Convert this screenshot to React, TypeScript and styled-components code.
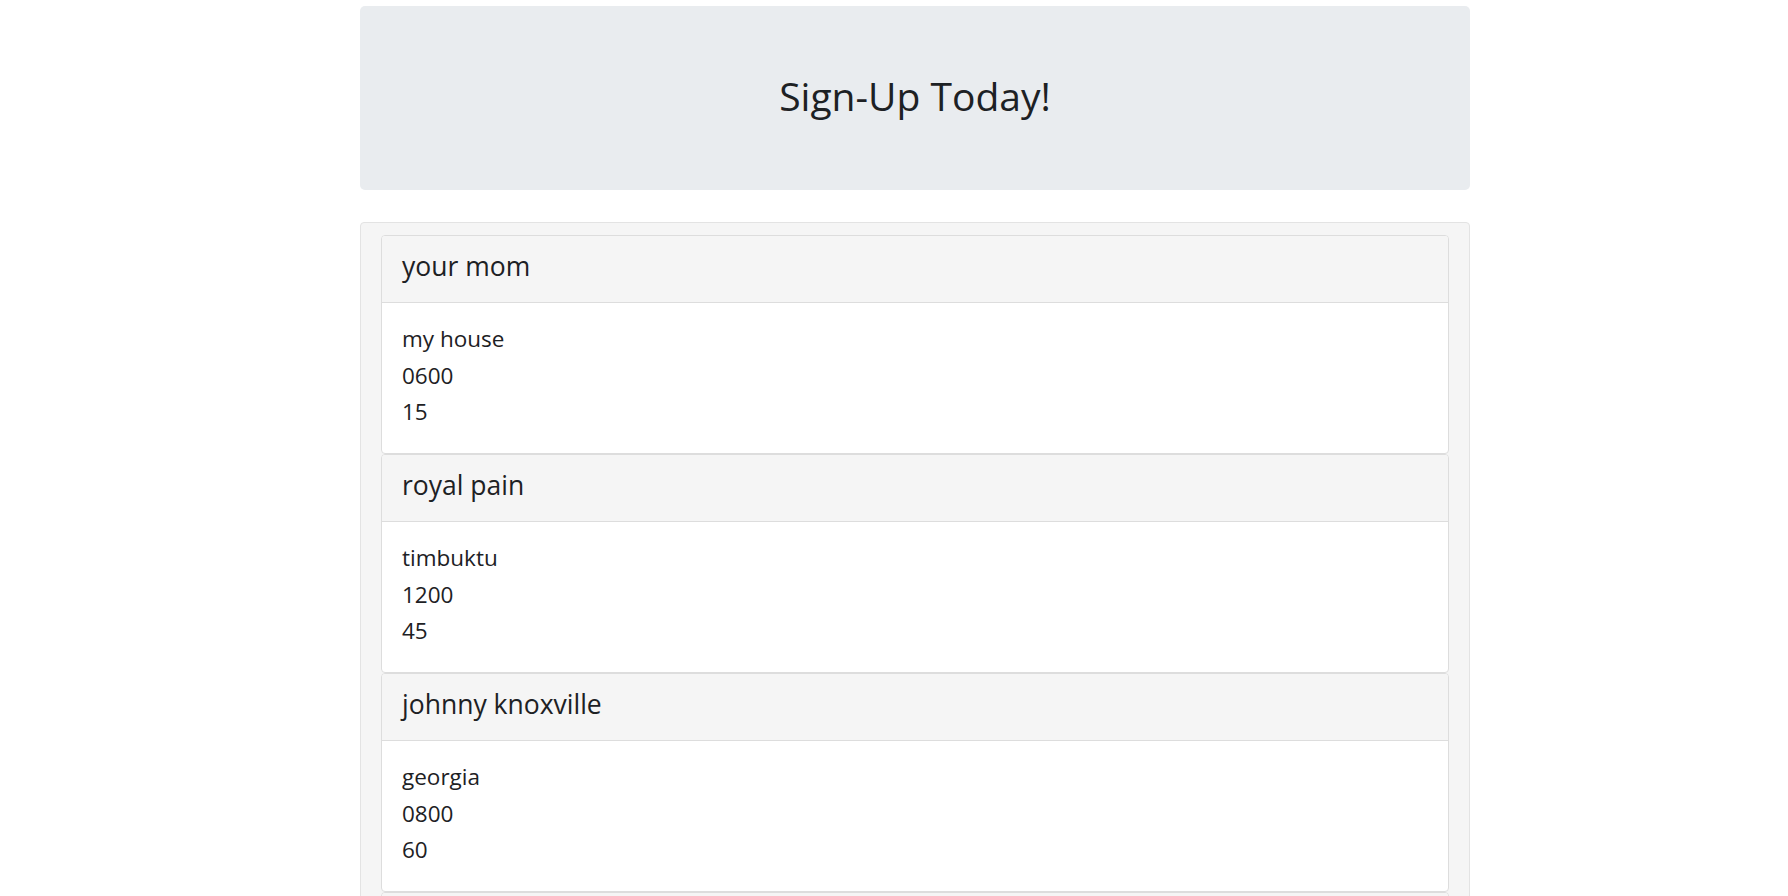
import React from 'react';
import styled, { createGlobalStyle } from 'styled-components';

const GlobalStyle = createGlobalStyle`
  body {
    margin: 0;
    background: #fff;
    color: #212529;
    font-family: "Open Sans", "Noto Sans", Arial, sans-serif;
  }
`;

const Page = styled.div`
  padding: 6px 0 0 42px;
`;

const PageContainer = styled.div`
  width: 1110px;
  margin: 0 auto;
`;

const Jumbotron = styled.div`
  background: #e9ecef;
  border-radius: 5px;
  padding: 64px 32px;
  margin-bottom: 32px;
  text-align: center;
`;

const HeroTitle = styled.h1`
  margin: 2px 0 6px;
  font-size: 39px;
  font-weight: 400;
  line-height: 48px;
  color: #1d2124;
`;

const Well = styled.div`
  background: #f5f5f5;
  border: 1px solid #e3e3e3;
  border-radius: 4px;
  padding: 12px 20px 0;
`;

const Panel = styled.div`
  background: #fff;
  border: 1px solid #ddd;
  border-radius: 4px;
  overflow: hidden;
`;

const PanelHeading = styled.div`
  background: #f5f5f5;
  border-bottom: 1px solid #ddd;
  padding: 13px 20px 19px;
  font-size: 26.5px;
  line-height: 34px;
  color: #1d2124;
`;

const PanelBody = styled.div`
  padding: 18px 20px 22px;
  font-size: 22.5px;
  line-height: 36.67px;
  color: #1d2124;
`;

const Line = styled.div``;

const signups = [
  { name: 'your mom', place: 'my house', time: '0600', minutes: '15' },
  { name: 'royal pain', place: 'timbuktu', time: '1200', minutes: '45' },
  { name: 'johnny knoxville', place: 'georgia', time: '0800', minutes: '60' },
  { name: 'steve-o', place: 'florida', time: '1000', minutes: '30' },
];

const App = () => {
  return (
    <>
      <GlobalStyle />
      <Page>
        <PageContainer>
          <Jumbotron>
            <HeroTitle>Sign-Up Today!</HeroTitle>
          </Jumbotron>
          <Well>
            {signups.map((s) => (
              <Panel key={s.name}>
                <PanelHeading>{s.name}</PanelHeading>
                <PanelBody>
                  <Line>{s.place}</Line>
                  <Line>{s.time}</Line>
                  <Line>{s.minutes}</Line>
                </PanelBody>
              </Panel>
            ))}
          </Well>
        </PageContainer>
      </Page>
    </>
  );
};

export default App;
